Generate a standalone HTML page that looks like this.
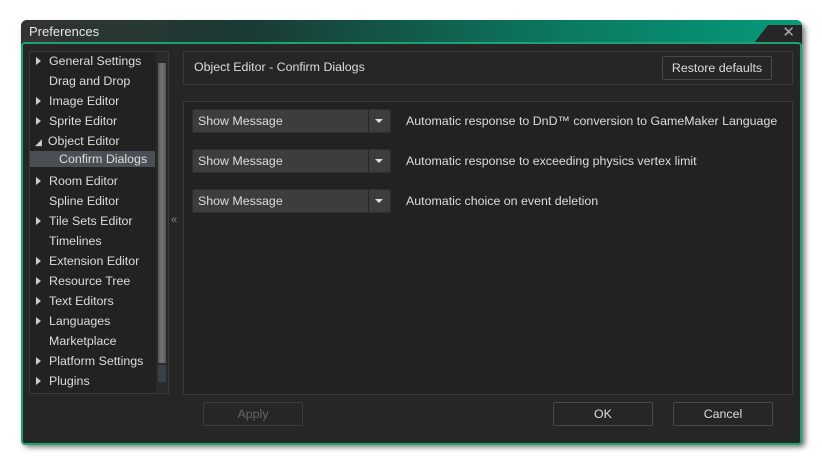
<!DOCTYPE html><html><head><style>
body{margin:0;width:822px;height:463px;background:#fff;font-family:"Liberation Sans",sans-serif;font-size:12.4px;color:#ddd;position:relative;overflow:hidden}
.a{position:absolute}
.win{left:21px;top:20px;width:781px;height:423px;border-radius:6px 6px 4px 4px;background:#262626;box-shadow:3px 4px 6px rgba(0,0,0,.55)}
.title{left:0;top:0;width:781px;height:23px;border-radius:6px 6px 0 0;background:linear-gradient(90deg,#333 0%,#1a3b35 30%,#0a7a62 70%,#079a7a 100%);color:#e8e8e8;font-size:13px}
.body{left:0;top:22px;width:777px;height:399px;border:2px solid #1ca36f;border-radius:4px;background:#262626}
.box{border:1px solid #3a3a3a;background:#222}
.tree div{position:absolute;left:0;height:20px;line-height:20px;white-space:nowrap}
.tri{display:inline-block;width:0;height:0;border-left:5px solid #ccc;border-top:4px solid transparent;border-bottom:4px solid transparent;margin:0 8px 0 6px;vertical-align:0}
.dd{position:absolute;left:8px;width:197px;height:22px;background:#3d3d3d;border:1px solid #2e2e2e;border-radius:2px;line-height:22px}
.dd span{padding-left:5px}
.dd i{position:absolute;right:0;top:0;width:21px;height:22px;border-left:1px solid #262626}
.dd i:after{content:"";position:absolute;left:6px;top:9px;border-top:4px solid #ddd;border-left:4px solid transparent;border-right:4px solid transparent}
.lab{position:absolute;left:222px;line-height:22px}
.btn{position:absolute;border:1px solid #4a4a4a;border-radius:2px;text-align:center;line-height:22px;background:#262626}
</style></head><body>
<div class="a win">
<div class="a title"><span class="a" style="left:8px;top:4px">Preferences</span>
<div class="a" style="right:0;top:5px;width:48px;height:18px;background:#262626;clip-path:polygon(14px 0,100% 0,100% 100%,0 100%)"></div>
<span class="a" style="right:7px;top:3px;color:#aaa;font-size:15px">✕</span></div>
<div class="a body">
<div class="a box tree" style="left:6px;top:7px;width:138px;height:341px">
<div style="top:-1px"><span class="tri"></span>General Settings</div>
<div style="top:19px;left:19px">Drag and Drop</div>
<div style="top:39px"><span class="tri"></span>Image Editor</div>
<div style="top:59px"><span class="tri"></span>Sprite Editor</div>
<div style="top:79px"><span style="display:inline-block;margin:0 6px 0 5px;font-size:9px;color:#ccc">◢</span>Object Editor</div>
<div style="left:0;width:125px;height:16px;top:99px;line-height:16px;background:#4a4e55"><span style="padding-left:29px">Confirm Dialogs</span></div>
<div style="top:119px"><span class="tri"></span>Room Editor</div>
<div style="top:139px;left:19px">Spline Editor</div>
<div style="top:159px"><span class="tri"></span>Tile Sets Editor</div>
<div style="top:179px;left:19px">Timelines</div>
<div style="top:199px"><span class="tri"></span>Extension Editor</div>
<div style="top:219px"><span class="tri"></span>Resource Tree</div>
<div style="top:239px"><span class="tri"></span>Text Editors</div>
<div style="top:259px"><span class="tri"></span>Languages</div>
<div style="top:279px;left:19px">Marketplace</div>
<div style="top:299px"><span class="tri"></span>Platform Settings</div>
<div style="top:319px"><span class="tri"></span>Plugins</div>
<div class="a" style="left:126px;top:0;width:12px;height:341px;background:#2a2a2a"></div>
<div class="a" style="left:128px;top:11px;width:8px;height:300px;background:linear-gradient(90deg,#555,#777,#555)"></div>
<div class="a" style="left:128px;top:313px;width:8px;height:17px;background:#3a4048"></div>
</div>
<span class="a" style="left:148px;top:170px;color:#888;font-size:11px">«</span>
<div class="a box" style="left:160px;top:7px;width:608px;height:32px;background:#262626">
<span class="a" style="left:10px;top:8px">Object Editor - Confirm Dialogs</span>
<div class="btn" style="left:478px;top:4px;width:108px">Restore defaults</div></div>
<div class="a box" style="left:160px;top:57px;width:608px;height:292px">
<div class="dd" style="top:7px"><span>Show Message</span><i></i></div><div class="lab" style="top:8px">Automatic response to DnD™ conversion to GameMaker Language</div>
<div class="dd" style="top:47px"><span>Show Message</span><i></i></div><div class="lab" style="top:48px">Automatic response to exceeding physics vertex limit</div>
<div class="dd" style="top:87px"><span>Show Message</span><i></i></div><div class="lab" style="top:88px">Automatic choice on event deletion</div>
</div>
<div class="btn" style="left:180px;top:358px;width:98px;color:#666;border-color:#3c3c3c">Apply</div>
<div class="btn" style="left:530px;top:358px;width:98px">OK</div>
<div class="btn" style="left:650px;top:358px;width:98px">Cancel</div>
</div></div>
</body></html>
